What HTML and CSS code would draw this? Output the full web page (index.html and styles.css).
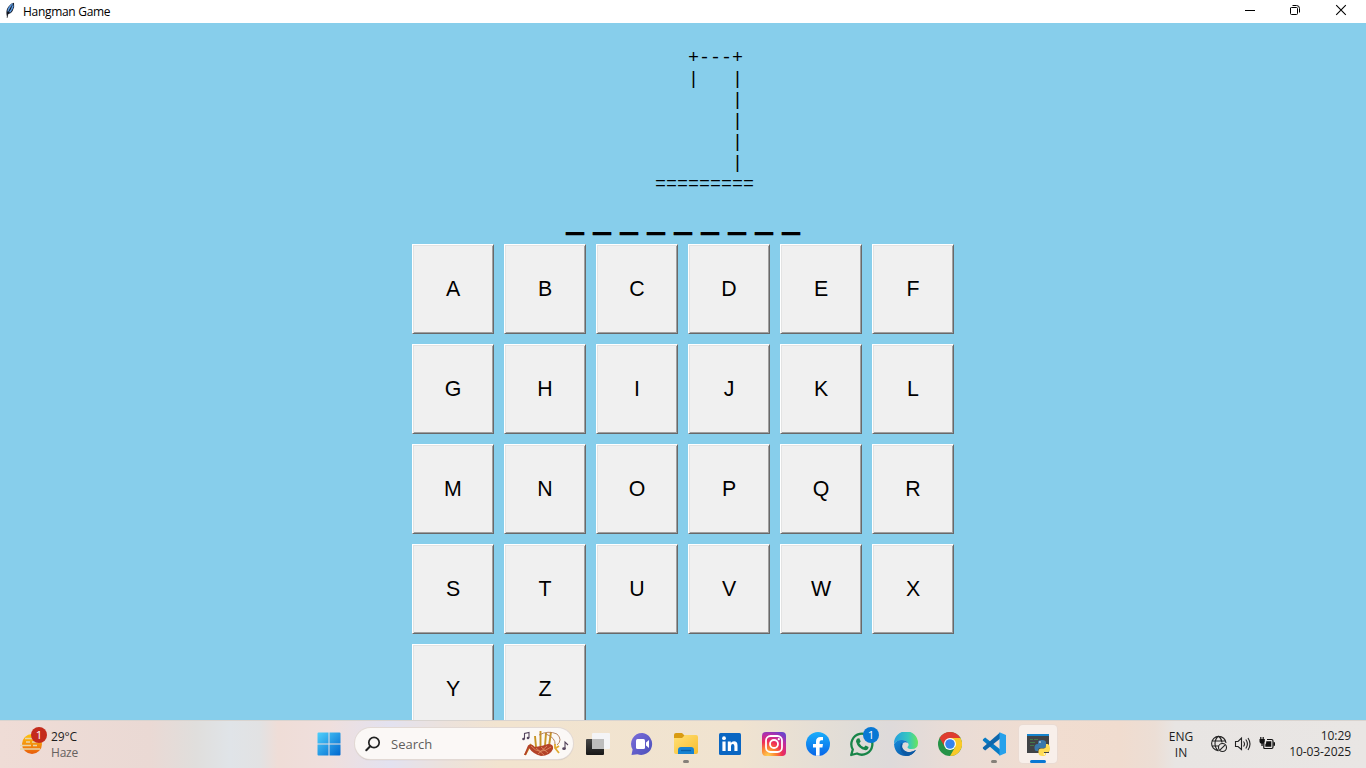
FILE: index.html
```html
<!DOCTYPE html>
<html lang="en">
<head>
<meta charset="utf-8">
<title>Hangman Game</title>
<link rel="stylesheet" href="styles.css">
</head>
<body>
<div class="desktop">
<header class="titlebar">
  <svg class="feather" width="10" height="17" viewBox="0 0 10 17"><path d="M2.2 15.5C1 11 1 7 4 4Q6 1 9 .8Q10 5 7.6 9Q6 12 3 12.3Z" fill="#151b28"/><path d="M3.2 9.5Q3.2 5.7 7.8 2M4.6 10.3Q7.3 7 8 3.3" fill="none" stroke="#5a98df" stroke-width="1.7"/><path d="M2.1 16 3 11 7.5 2.5" fill="none" stroke="#111" stroke-width=".6"/></svg>
  <span class="title">Hangman Game</span>
  <svg class="caption" width="46" height="22"><path d="M15 10.5H25" stroke="#000"/></svg>
  <svg class="caption" width="46" height="22"><path d="M14.5 8Q14.5 7.5 15.5 7.5H20.5Q21.5 7.5 21.5 8.5V13.5Q21.5 14.5 20.5 14.5H15.5Q14.5 14.5 14.5 13.5ZM16.5 5.5H20.5Q23.5 5.5 23.5 8.5V12.5" fill="none" stroke="#000"/></svg>
  <svg class="caption" width="46" height="22"><path d="M14.2 5.2 23.8 14.8M23.8 5.2 14.2 14.8" stroke="#000" stroke-width="1.1"/></svg>
</header>
<main class="game">
<pre class="gallows">   +---+
   |   |
       |
       |
       |
       |
=========</pre>
<div class="word">_ _ _ _ _ _ _ _ _</div>
<div class="keys">
<button class="key">A</button><button class="key">B</button><button class="key">C</button><button class="key">D</button><button class="key">E</button><button class="key">F</button>
<button class="key">G</button><button class="key">H</button><button class="key">I</button><button class="key">J</button><button class="key">K</button><button class="key">L</button>
<button class="key">M</button><button class="key">N</button><button class="key">O</button><button class="key">P</button><button class="key">Q</button><button class="key">R</button>
<button class="key">S</button><button class="key">T</button><button class="key">U</button><button class="key">V</button><button class="key">W</button><button class="key">X</button>
<button class="key">Y</button><button class="key">Z</button>
</div>
</main>
<footer class="taskbar">
  <div class="weather">
    <svg class="haze" width="30" height="34" viewBox="0 0 30 34">
      <defs><linearGradient id="sun" x2="0" y2="1"><stop stop-color="#ffc60b"/><stop offset="1" stop-color="#e85c0c"/></linearGradient></defs>
      <circle cx="12" cy="17" r="10" fill="url(#sun)"/>
      <path d="M5 11.5H13M6 15H10M12 15H20M0 18.5H11M13 18.5H17M0 22H20" stroke="#e9d5a6" stroke-width="1.5"/>
      <circle cx="19" cy="8" r="8" fill="#c42b1c"/><text x="19" y="12.2" class="badge-text">1</text>
    </svg>
    <div class="weather-text"><div class="temp">29°C</div><div class="haze-label">Haze</div></div>
  </div>
  <div class="task start"><svg width="24" height="24" viewBox="0 0 24 24"><defs><linearGradient id="win" x2="1" y2="1"><stop stop-color="#4fd0fb"/><stop offset="1" stop-color="#0067cf"/></linearGradient></defs><path d="M0.5 1.5Q.5.5 1.5.5H11.5V11.5H.5ZM12.5.5H22.5Q23.5.5 23.5 1.5V11.5H12.5ZM.5 12.5H11.5V23.5H1.5Q.5 23.5.5 22.5ZM12.5 12.5H23.5V22.5Q23.5 23.5 22.5 23.5H12.5Z" fill="url(#win)"/></svg></div>
  <div class="search">
    <svg width="16" height="16" viewBox="0 0 16 16"><circle cx="9" cy="6.5" r="5.2" fill="none" stroke="#222" stroke-width="1.7"/><path d="M5.2 10.3 1.3 14.2" stroke="#222" stroke-width="2" stroke-linecap="round"/></svg>
    <span class="search-label">Search</span>
    <svg class="bagpipe" width="48" height="30" viewBox="0 0 48 30">
      <path d="M4 26 10 15M15 18 14 7M19.5 18V2M24 17 25 4M28 17 30 3" stroke="#c89425" stroke-width="1.9" fill="none"/>
      <path d="M3 26 7 16.5Q10 14 14 18Q22 17 27 15Q33 15 32 20Q29 27 20 27Q12 25 8 19L5 26Z" fill="#b44228"/>
      <path d="M10 17Q18 27 30 18M15 19 23 26M20 18 27 24M26 17 17 25" stroke="#e59b70" stroke-width=".7" fill="none"/>
      <path d="M18 6Q27 1 36 5Q42 11 36 16M25 5Q35 9 34 16" fill="none" stroke="#b17b53" stroke-width=".9"/>
      <path d="M34 15V19L38 24M38 17 35 19" stroke="#e0aa31" stroke-width="1.8" fill="none"/>
      <path d="M3.5 10V4.5L8 3.5V9M44 20V13L47 16" fill="none" stroke="#56465e" stroke-width="1.1"/><circle cx="2.5" cy="10" r="1.3" fill="#56465e"/><circle cx="7" cy="9" r="1.3" fill="#56465e"/><ellipse cx="43" cy="19.7" rx="1.8" ry="1.4" fill="#56465e"/>
    </svg>
  </div>
  <div class="task"><svg class="taskview" width="26" height="26" viewBox="0 0 26 26"><defs><linearGradient id="dark" x2="0" y2="1"><stop stop-color="#484848"/><stop offset="1" stop-color="#171717"/></linearGradient></defs><rect x="2" y="8" width="18" height="16" rx="1" fill="url(#dark)"/><rect x="8" y="2" width="18" height="16" rx="1" fill="#f4f4f6"/><path d="M8 8H20V18H9Q8 18 8 17Z" fill="#bdbdbd"/></svg></div>
  <div class="task"><svg width="24" height="24" viewBox="0 0 24 24"><defs><linearGradient id="chat" x2="1" y2="1"><stop stop-color="#7b6dda"/><stop offset="1" stop-color="#4b50ba"/></linearGradient></defs><path d="M12.5 1A11 11 0 1 1 7.5 22.3L1.5 23 2.6 17.5A11 11 0 0 1 12.5 1Z" fill="url(#chat)"/><rect x="6" y="7" width="9" height="10" rx="1.5" fill="#fff"/><path d="M16 10.5 19 8V16L16 13.5Z" fill="#fff"/></svg></div>
  <div class="task running"><svg width="24" height="24" viewBox="0 0 24 24"><defs><linearGradient id="folder" x2="1" y2="1"><stop stop-color="#ffe075"/><stop offset="1" stop-color="#f8bd2e"/></linearGradient></defs><path d="M0 3Q0 1 2 1H8L11 4V8H0Z" fill="#d99b12"/><path d="M0 6H8L11 3H22Q24 3 24 5V20Q24 22 22 22H2Q0 22 0 20Z" fill="url(#folder)"/><path d="M4 22V18Q4 15 7 15H17Q20 15 20 18V22Z" fill="#1683d2"/><path d="M7 18.5H17" stroke="#0860a8" stroke-width="1.3"/></svg><i></i></div>
  <div class="task"><svg width="22" height="22" viewBox="0 0 22 22"><rect width="22" height="22" rx="1.5" fill="#0a66c2"/><circle cx="5" cy="5.2" r="1.9" fill="#fff"/><path d="M3.4 8.6H6.6V18H3.4ZM8.8 8.6H11.8V10Q12.7 8.3 15 8.3Q18.5 8.3 18.5 12.5V18H15.4V13.2Q15.4 11 13.8 11Q12 11 12 13.3V18H8.8Z" fill="#fff"/></svg></div>
  <div class="task"><svg width="24" height="24" viewBox="0 0 24 24"><defs><radialGradient id="insta" cx=".25" cy="1" r="1.1"><stop stop-color="#ffd255"/><stop offset=".3" stop-color="#fb8432"/><stop offset=".55" stop-color="#ef2d58"/><stop offset=".8" stop-color="#bc2ca4"/><stop offset="1" stop-color="#6e42ca"/></radialGradient></defs><rect width="24" height="24" rx="4" fill="url(#insta)"/><rect x="4" y="4" width="16" height="16" rx="4.5" fill="none" stroke="#fff" stroke-width="1.8"/><circle cx="12" cy="12" r="4" fill="none" stroke="#fff" stroke-width="1.8"/><circle cx="16.8" cy="7.2" r="1.1" fill="#fff"/></svg></div>
  <div class="task"><svg width="24" height="24" viewBox="0 0 24 24"><defs><linearGradient id="fb" x2="0" y2="1"><stop stop-color="#19aefb"/><stop offset="1" stop-color="#0866e8"/></linearGradient></defs><circle cx="12" cy="12" r="12" fill="url(#fb)"/><path d="M10 23.8V15.5H7V12H10V9.5Q10 5 14.5 5H17V8.2H15.3Q13.6 8.2 13.6 10V12H17L16.4 15.5H13.6V23.8Z" fill="#fff"/></svg></div>
  <div class="task whatsapp"><svg width="26" height="26" viewBox="0 0 26 26"><path d="M2.2 24 3.8 18.5A10.5 10.5 0 1 1 8 22.5Z" fill="none" stroke="#178548" stroke-width="2.3" stroke-linejoin="round"/><path d="M8.5 7.5 10.3 7.3 11.7 10.5 10.3 12.2Q11.8 15 15 16.2L16.6 14.5 19.6 16Q19.4 19 16.5 19.2Q9 18 7 10.5Q7 8.5 8.5 7.5Z" fill="#178548"/></svg><span class="count">1</span></div>
  <div class="task"><svg width="24" height="24" viewBox="0 0 24 24"><defs><linearGradient id="edge-top" x2="1"><stop stop-color="#249fe0"/><stop offset=".6" stop-color="#35c8be"/><stop offset="1" stop-color="#69e55b"/></linearGradient><linearGradient id="edge-low" x2="1" y2="1"><stop stop-color="#158bdc"/><stop offset="1" stop-color="#074c99"/></linearGradient></defs><path d="M0 11.5A12 12 0 0 1 24 11Q24 17 17.5 17Q13.5 17 13.5 15Q15 13.5 14.5 12Q13 8 8 8Q3 8 0 11.5Z" fill="url(#edge-top)"/><path d="M0 12Q3 7.5 8 8Q12.5 8 14 11Q10 9 8.5 12Q7 16 10 18.5Q15 22 22 18Q18 24 11.5 24Q1 23.5 0 12Z" fill="url(#edge-low)"/><path d="M7 11Q4 20 13 24Q18.5 23.5 22 18Q15 22 10.5 18.5Q7 15.5 8.5 12Z" fill="#0c59a4"/></svg></div>
  <div class="task"><svg width="24" height="24" viewBox="0 0 24 24"><circle cx="12" cy="12" r="12" fill="#269347"/><path d="M1.6 6A12 12 0 0 1 22.4 6H12L7 15Z" fill="#df3b2e"/><path d="M22.4 6A12 12 0 0 1 12 24L17.2 15 12 6Z" fill="#f9c928"/><circle cx="12" cy="12" r="6" fill="#fff"/><circle cx="12" cy="12" r="4.8" fill="#3583ed"/></svg></div>
  <div class="task running"><svg width="24" height="24" viewBox="0 0 24 24"><path d="M1 7.2 3.2 5.6 18 17.2V23.5L.8 8.4Z" fill="#087bc4"/><path d="M1 16.8 3.2 18.4 18 6.8V.5L.8 15.6Z" fill="#0e67ac"/><path d="M17.5.2 24 3V21L17.5 23.8Z" fill="#27a1eb"/></svg><i></i></div>
  <div class="task active"><svg width="24" height="24" viewBox="0 0 24 24"><rect x="1" y="2" width="22" height="19" fill="#414346"/><path d="M1 2H23V4H1Z" fill="#1684cd"/><path d="M4 7.5H7M8 7.5H12M4 10.5H9M4 13.5H8" stroke="#43784a" stroke-width="1.2"/><path d="M12 12V10Q12 8 16 8Q20 8 20 10.5V14Q20 16 17 16H14Q12 16 12 19H10.5Q8.5 19 8.5 15.5Q8.5 12 11.5 12Z" fill="#3978aa"/><path d="M20 12H22Q24 13 24 16.5Q24 20 22 20H18V21H20V22Q20 24 16.5 24Q12.5 24 12.5 21V19Q12.5 16.5 15 16.5H18Q20 16 20 14Z" fill="#ffdc55"/><circle cx="14" cy="10" r=".8" fill="#fff"/><circle cx="18.3" cy="22" r=".8" fill="#fff"/></svg><i></i></div>
  <div class="tray">
    <div class="lang">ENG<br>IN</div>
    <svg width="18" height="18" viewBox="0 0 18 18" class="net"><g fill="none" stroke="#222" stroke-width="1.1"><path d="M16 8A7.2 7.2 0 1 0 8 15.7M1.5 6H15.5M1.5 11H9M8.5 1Q5 4 5 8.5Q5 13 8.5 16M8.5 1Q11.5 3.5 12 7.5"/><circle cx="12.5" cy="12.5" r="4"/><path d="M9.8 15.2 15.2 9.8"/></g></svg>
    <svg width="18" height="18" viewBox="0 0 18 18" class="sound"><path d="M1.5 6.5H4L7.5 3V14.5L4 11.5H1.5ZM9.5 6.5Q11.5 9 9.5 11.5M11.8 4.5Q15 9 11.8 13.5M14 3Q18 9 14 15" fill="none" stroke="#222" stroke-width="1.1"/></svg>
    <svg width="18" height="18" viewBox="0 0 18 18" class="battery"><path d="M4.8 13.5H12.5Q14 13.5 14 12V6Q14 4.5 12.5 4.5H8M4.8 8V13.5" fill="none" stroke="#111" stroke-width="1.2"/><path d="M1.8 2V5M4.2 2V5" stroke="#111" stroke-width="1.2"/><path d="M.5 4H5.8V6.5Q5.8 8.3 3.7 8.7V11H2.4V8.7Q.5 8.3.5 6.5Z" fill="#111"/><path d="M7.3 6.3H12.3V11.8H6.3V9.5Q7.3 8.5 7.3 6.3Z" fill="#111"/><path d="M15.2 7.2V10.8" stroke="#111" stroke-width="1.6"/></svg>
    <div class="clock"><div class="time">10:29</div><div>10-03-2025</div></div>
  </div>
</footer>
</div>
</body>
</html>
```
FILE: styles.css
```css
* { box-sizing: border-box; }
body { margin: 0; overflow: hidden; }
svg { display: block; flex: none; }
.desktop { width: 1366px; height: 768px; display: flex; flex-direction: column; background: #87ceeb; }
.titlebar { flex: 0 0 23px; display: flex; align-items: flex-start; background: #fff; padding-left: 5px; }
.feather { margin-top: 2px; }
.title { margin-left: 8px; flex: 1; font: 12px/23px "Open Sans", sans-serif; color: #000; letter-spacing: -.3px; }
.caption:last-child { margin-right: -2px; }
.game { flex: 1; min-height: 0; overflow: hidden; display: flex; flex-direction: column; align-items: center; }
.gallows { flex: none; margin: 25px 0 0 43px; width: 99px; height: 147px; font: 18.33px/21px "Liberation Mono", monospace; color: #000; }
.word { flex: none; height: 49px; font: bold 32.37px/48px "Liberation Sans", sans-serif; color: #000; white-space: nowrap; text-shadow: 0 1px 0 #000, 0 -1px 0 #000; }
.keys { flex: none; display: grid; grid-template-columns: repeat(6, 82px); grid-auto-rows: 90px; gap: 10px; }
.key { padding: 1px 0 0; border: 1px solid; border-color: #fff #696969 #696969 #fff; border-radius: 0; background: #f0f0f0; box-shadow: inset 1px 1px #e3e3e3, inset -1px -1px #a0a0a0; font: 21.33px "Liberation Sans", sans-serif; color: #000; }
.taskbar { flex: 0 0 48px; display: flex; border-top: 1px solid #d9d4d0; font: 12px "Open Sans", sans-serif; color: #1d1d1d; background: linear-gradient(90deg, #efdcd6 0, #ead9d4 150px, #e0dedc 195px, #e0e4e8 230px, #e2e2e3 260px, #efddd7 278px, #efdfdd 330px, #e3e2f0 390px, #ece2dc 445px, #f2e4cf 500px, #f0e3d0 740px, #dfdcd8 860px, #dedada 890px, #e9dcd6 950px, #f1ddd0 1050px, #f0dccf 1120px, #ecded5 1155px, #e8e5e3 1175px, #e9e6e4 1366px); }
.weather { width: 307px; padding-left: 20px; display: flex; }
.haze { margin-top: 6px; }
.badge-text { font: 11.5px "Open Sans", sans-serif; fill: #fff; text-anchor: middle; }
.weather-text { margin-left: 1px; padding-top: 8px; line-height: 16px; }
.temp { letter-spacing: -.1px; }
.haze-label { color: #66615f; letter-spacing: -.2px; }
.task { position: relative; width: 44px; height: 46px; flex: none; display: flex; align-items: center; justify-content: center; }
.start { margin-right: 3px; }
.taskview { margin-right: 3px; }
.search { width: 218px; height: 31px; margin: 7px 3px 0 1px; padding: 0 4px 0 10px; border-radius: 16px; background: #fbf8f6; box-shadow: 0 0 0 1px #e2d9d4, 0 1px 1px #b9b1aa; display: flex; align-items: center; }
.search-label { margin-left: 10px; flex: 1; font-size: 13px; color: #605e5c; }
.running i { position: absolute; bottom: 4px; left: 19px; width: 6px; height: 3px; border-radius: 2px; background: #858079; }
.active::before { content: ""; position: absolute; left: 3px; top: 4px; width: 38px; height: 38px; border-radius: 4px; background: #f8efea; box-shadow: 0 0 0 1px #eadbd3; }
.active svg { position: relative; }
.active i { position: absolute; bottom: 4px; left: 14px; width: 16px; height: 3px; border-radius: 2px; background: #0878d4; }
.count { position: absolute; left: 23px; top: 6px; width: 16px; height: 16px; border-radius: 50%; background: #0878d4; color: #fff; font-size: 11.5px; line-height: 16px; text-align: center; }
.tray { flex: 1; display: flex; align-items: center; height: 46px; padding-left: 106px; }
.lang { width: 30px; text-align: center; line-height: 16px; padding-top: 2px; }
.net { margin-left: 14px; }
.sound { margin-left: 6px; }
.battery { margin-left: 7px; }
.clock { margin-left: auto; padding-right: 15px; text-align: right; line-height: 16px; letter-spacing: -.08px; }
```
